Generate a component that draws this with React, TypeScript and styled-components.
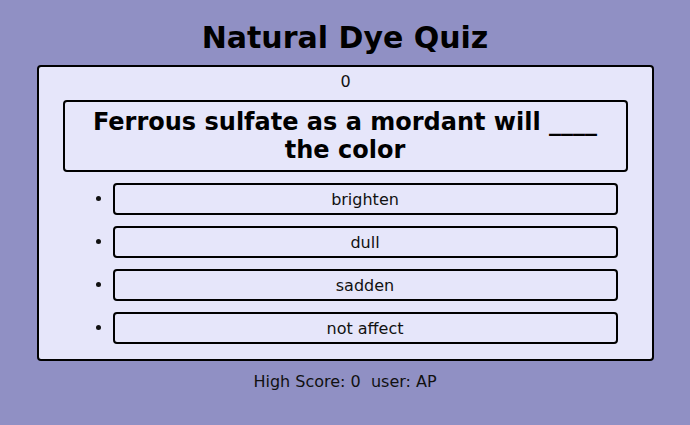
import React from "react";
import styled, { createGlobalStyle } from "styled-components";

const Global = createGlobalStyle`
  html, body { margin: 0; padding: 0; background: #9090c4; }
  body { font-family: "DejaVu Sans", Verdana, sans-serif; color: #111; }
`;

const Page = styled.div`
  width: 690px;
  height: 425px;
  display: flex;
  flex-direction: column;
  align-items: center;
  padding-top: 19px;
  box-sizing: border-box;
`;

const Title = styled.h1`
  margin: 0 0 9px;
  font-size: 30px;
  font-weight: bold;
  line-height: 37px;
  color: #000;
`;

const Card = styled.div`
  width: 617px;
  box-sizing: border-box;
  background: #e6e6fa;
  border: 2px solid #000;
  border-radius: 4px;
  padding: 5px 24px 15px;
  display: flex;
  flex-direction: column;
  align-items: stretch;
`;

const Score = styled.div`
  text-align: center;
  font-size: 16px;
  line-height: 19px;
  margin-bottom: 9px;
  margin-left: 1px;
`;

const Question = styled.div`
  border: 2px solid #000;
  border-radius: 4px;
  padding: 6px 10px 6px;
  text-align: center;
  font-size: 24px;
  font-weight: bold;
  line-height: 28px;
  color: #000;
`;

const Options = styled.ul`
  list-style: disc;
  margin: 11px 0 0;
  padding: 0 0 0 40px;
`;

const Option = styled.li`
  margin: 0 10px 11px 10px;
  font-size: 16px;
  &:last-child { margin-bottom: 0; }
`;

const Choice = styled.button`
  width: 100%;
  height: 32px;
  box-sizing: border-box;
  background: #e6e6fa;
  border: 2px solid #000;
  border-radius: 4px;
  font-family: "DejaVu Sans", Verdana, sans-serif;
  font-size: 16px;
  color: #111;
  cursor: pointer;
  vertical-align: middle;
`;

const Footer = styled.div`
  margin-top: 11px;
  font-size: 16px;
  line-height: 19px;
  color: #111;
  white-space: pre;
`;

const answers = ["brighten", "dull", "sadden", "not affect"];

export default function App() {
  const highScore = 0;
  const user = "AP";
  return (
    <>
      <Global />
      <Page>
        <Title>Natural Dye Quiz</Title>
        <Card>
          <Score>0</Score>
          <Question>Ferrous sulfate as a mordant will ____ the color</Question>
          <Options>
            {answers.map((a) => (
              <Option key={a}>
                <Choice>{a}</Choice>
              </Option>
            ))}
          </Options>
        </Card>
        <Footer>{`High Score: ${highScore}  user: ${user}`}</Footer>
      </Page>
    </>
  );
}
